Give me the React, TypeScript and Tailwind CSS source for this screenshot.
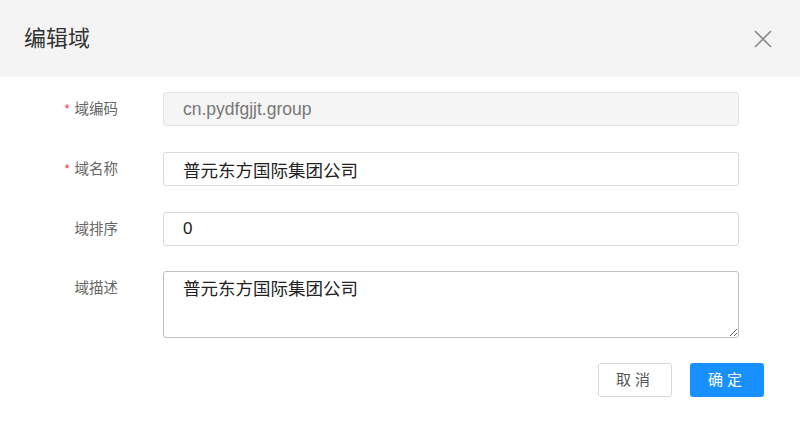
import React from "react";

const font = { fontFamily: '"Liberation Sans", "Noto Sans CJK SC", sans-serif' };

function Label({ text, required }: { text: string; required?: boolean }) {
  return (
    <div className="w-[118px] h-[34px] shrink-0 flex items-center justify-end text-[14.5px] text-[#666]">
      {required && <span className="text-[#f5222d] mr-[5px] text-[12px] leading-none">*</span>}
      <span className="leading-none">{text}</span>
    </div>
  );
}

export default function App() {
  return (
    <div className="w-[800px] h-[423px] bg-white" style={font}>
      <div className="h-[77px] bg-[#f4f4f4] flex items-center justify-between pl-6 pr-[28px]">
        <div className="text-[22px] text-[#333]">编辑域</div>
        <svg width="18" height="18" viewBox="0 0 18 18">
          <path d="M1 1 L17 17 M17 1 L1 17" stroke="#8c8c8c" strokeWidth="1.6" />
        </svg>
      </div>
      <div className="flex flex-col gap-[26px] pt-[15px]">
        <div className="flex items-start">
          <Label text="域编码" required />
          <input
            readOnly
            value="cn.pydfgjjt.group"
            className="ml-[45px] w-[576px] h-[34px] rounded-[3px] border border-[#e3e3e3] bg-[#f5f5f5] px-[19px] text-[17.5px] text-[#777] outline-none"
            style={font}
          />
        </div>
        <div className="flex items-start">
          <Label text="域名称" required />
          <input
            readOnly
            value="普元东方国际集团公司"
            className="ml-[45px] w-[576px] h-[34px] rounded-[3px] border border-[#d9d9d9] bg-white px-[19px] text-[17.5px] text-[#222] outline-none"
            style={font}
          />
        </div>
        <div className="flex items-start">
          <Label text="域排序" />
          <input
            readOnly
            value="0"
            className="ml-[45px] w-[576px] h-[34px] rounded-[3px] border border-[#d9d9d9] bg-white px-[19px] text-[17px] text-[#222] outline-none"
            style={font}
          />
        </div>
        <div className="flex items-start -mt-[1px]">
          <Label text="域描述" />
          <textarea
            readOnly
            value="普元东方国际集团公司"
            className="ml-[45px] w-[576px] h-[67px] rounded-[3px] border border-[#bfbfbf] bg-white px-[19px] pt-[3px] text-[17.5px] text-[#222] outline-none leading-[28px]"
            style={font}
          />
        </div>
      </div>
      <div className="flex justify-end gap-[18px] pr-[36px] pt-[25px]">
        <button className="w-[74px] h-[34px] rounded-[3px] border border-[#d9d9d9] bg-white text-[15px] text-[#555] tracking-[4px]">
          取消
        </button>
        <button className="w-[74px] h-[34px] rounded-[3px] bg-[#1890ff] text-[15px] text-white tracking-[4px]">
          确定
        </button>
      </div>
    </div>
  );
}
